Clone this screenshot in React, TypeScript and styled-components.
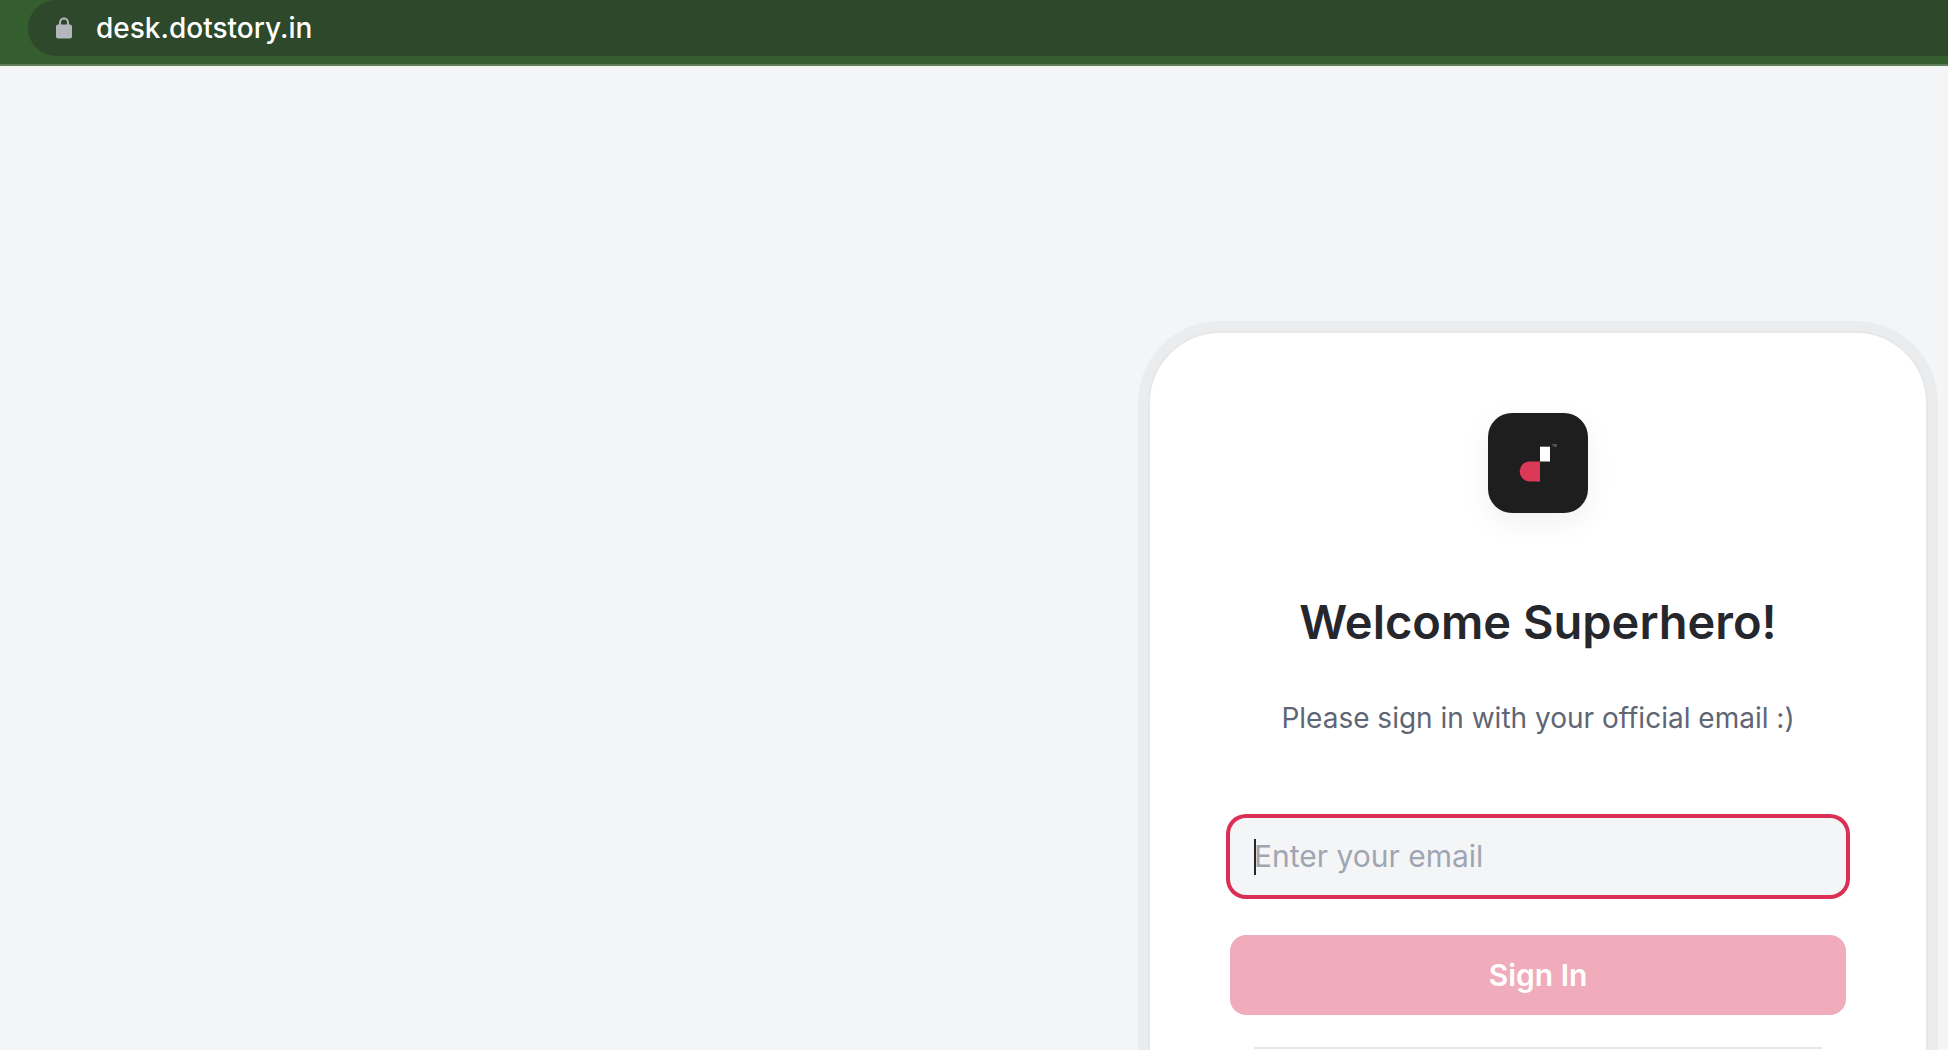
import React, { useState } from "react";
import styled, { createGlobalStyle } from "styled-components";

const GlobalStyle = createGlobalStyle`
  *, *::before, *::after { box-sizing: border-box; }
  body {
    margin: 0;
    background: #f4f5f7;
    font-family: Inter, "Liberation Sans", sans-serif;
  }
`;

const Page = styled.div`
  min-height: 100vh;
  display: flex;
  flex-direction: column;
  overflow: hidden;
`;

const BrowserBar = styled.header`
  display: flex;
  padding: 0 0 8px 28px;
  background: #355e2f;
  border-bottom: 2px solid #5f7f5b;
`;

const AddressBar = styled.div`
  flex: 1;
  height: 56px;
  display: flex;
  align-items: center;
  gap: 24px;
  padding-left: 28px;
  background: #2e482b;
  border-radius: 28px 0 0 28px;
`;

const LockIcon = styled.svg`
  width: 16px;
  height: 22px;
  flex: none;
`;

const Address = styled.span`
  color: #ffffff;
  font-family: Inter, "Liberation Sans", sans-serif;
  font-size: 28px;
  line-height: 36px;
  font-weight: 500;
`;

const Main = styled.main`
  flex: 1;
  display: flex;
  justify-content: flex-end;
  padding: 265px 20px 0;
`;

const Card = styled.section`
  width: 100%;
  max-width: 780px;
  display: flex;
  flex-direction: column;
  align-items: center;
  padding: 80px 80px 0;
  background: #ffffff;
  border: 2px solid #e6e7e9;
  border-bottom: 0;
  border-radius: 72px 72px 0 0;
  box-shadow: 0 0 0 10px #ebecee;
`;

const Logo = styled.svg`
  width: 100px;
  height: 100px;
  flex: none;
  border-radius: 24px;
  background: #1e1e1e;
  box-shadow: 0 10px 30px rgba(0, 0, 0, 0.06);
`;

const Title = styled.h1`
  margin: 80px 0 0;
  color: #26272d;
  font-size: 47px;
  line-height: 58px;
  font-weight: 600;
  text-align: center;
`;

const Subtitle = styled.p`
  margin: 48px 0 0;
  color: #5f6673;
  font-size: 28px;
  line-height: 38px;
  text-align: center;
`;

const Form = styled.form`
  width: 100%;
  display: flex;
  flex-direction: column;
  margin-top: 81px;
`;

const Field = styled.div`
  position: relative;
  display: flex;
`;

const EmailInput = styled.input`
  width: 100%;
  height: 77px;
  padding: 0 24px 2px;
  border: 0;
  border-radius: 16px;
  outline: none;
  background: #f4f5f7;
  box-shadow: 0 0 0 4px #dc2f55;
  color: #26272d;
  caret-color: transparent;
  font-family: inherit;
  font-size: 30px;

  &::placeholder {
    color: #9fa6b2;
    opacity: 1;
  }
`;

const Caret = styled.span`
  position: absolute;
  left: 24px;
  top: 21px;
  width: 2px;
  height: 36px;
  background: #26272d;
`;

const SubmitButton = styled.button`
  height: 80px;
  margin-top: 40px;
  border: 0;
  border-radius: 16px;
  background: #f0acbb;
  color: #ffffff;
  font-family: inherit;
  font-size: 30px;
  line-height: 36px;
  font-weight: 600;
`;

const Divider = styled.hr`
  align-self: stretch;
  height: 2px;
  margin: 32px 24px 0;
  border: 0;
  background: #e8e8e8;
`;

export default function App() {
  const [email, setEmail] = useState("");

  return (
    <Page>
      <GlobalStyle />
      <BrowserBar>
        <AddressBar>
          <LockIcon viewBox="0 0 16 22" aria-hidden="true">
            <path d="M4 9V5.5a4 4 0 0 1 8 0V9" fill="none" stroke="#b3b7bd" strokeWidth="2" />
            <rect x="0" y="7.5" width="16" height="14" rx="2" fill="#b3b7bd" />
          </LockIcon>
          <Address>desk.dotstory.in</Address>
        </AddressBar>
      </BrowserBar>
      <Main>
        <Card>
          <Logo viewBox="0 0 100 100" role="img" aria-label="Dotstory">
            <rect x="52" y="33.7" width="10" height="14.8" fill="#ffffff" />
            <path d="M52 48.4H41.7a10 10 0 0 0 0 20.1H52Z" fill="#dc3858" />
            <text x="64" y="34" fontSize="3" fill="#aaaaaa">TM</text>
          </Logo>
          <Title>Welcome Superhero!</Title>
          <Subtitle>Please sign in with your official email :)</Subtitle>
          <Form onSubmit={(event) => event.preventDefault()}>
            <Field>
              <EmailInput
                type="email"
                aria-label="Email"
                placeholder="Enter your email"
                value={email}
                onChange={(event) => setEmail(event.target.value)}
              />
              {email === "" && <Caret />}
            </Field>
            <SubmitButton type="submit">Sign In</SubmitButton>
          </Form>
          <Divider />
        </Card>
      </Main>
    </Page>
  );
}
